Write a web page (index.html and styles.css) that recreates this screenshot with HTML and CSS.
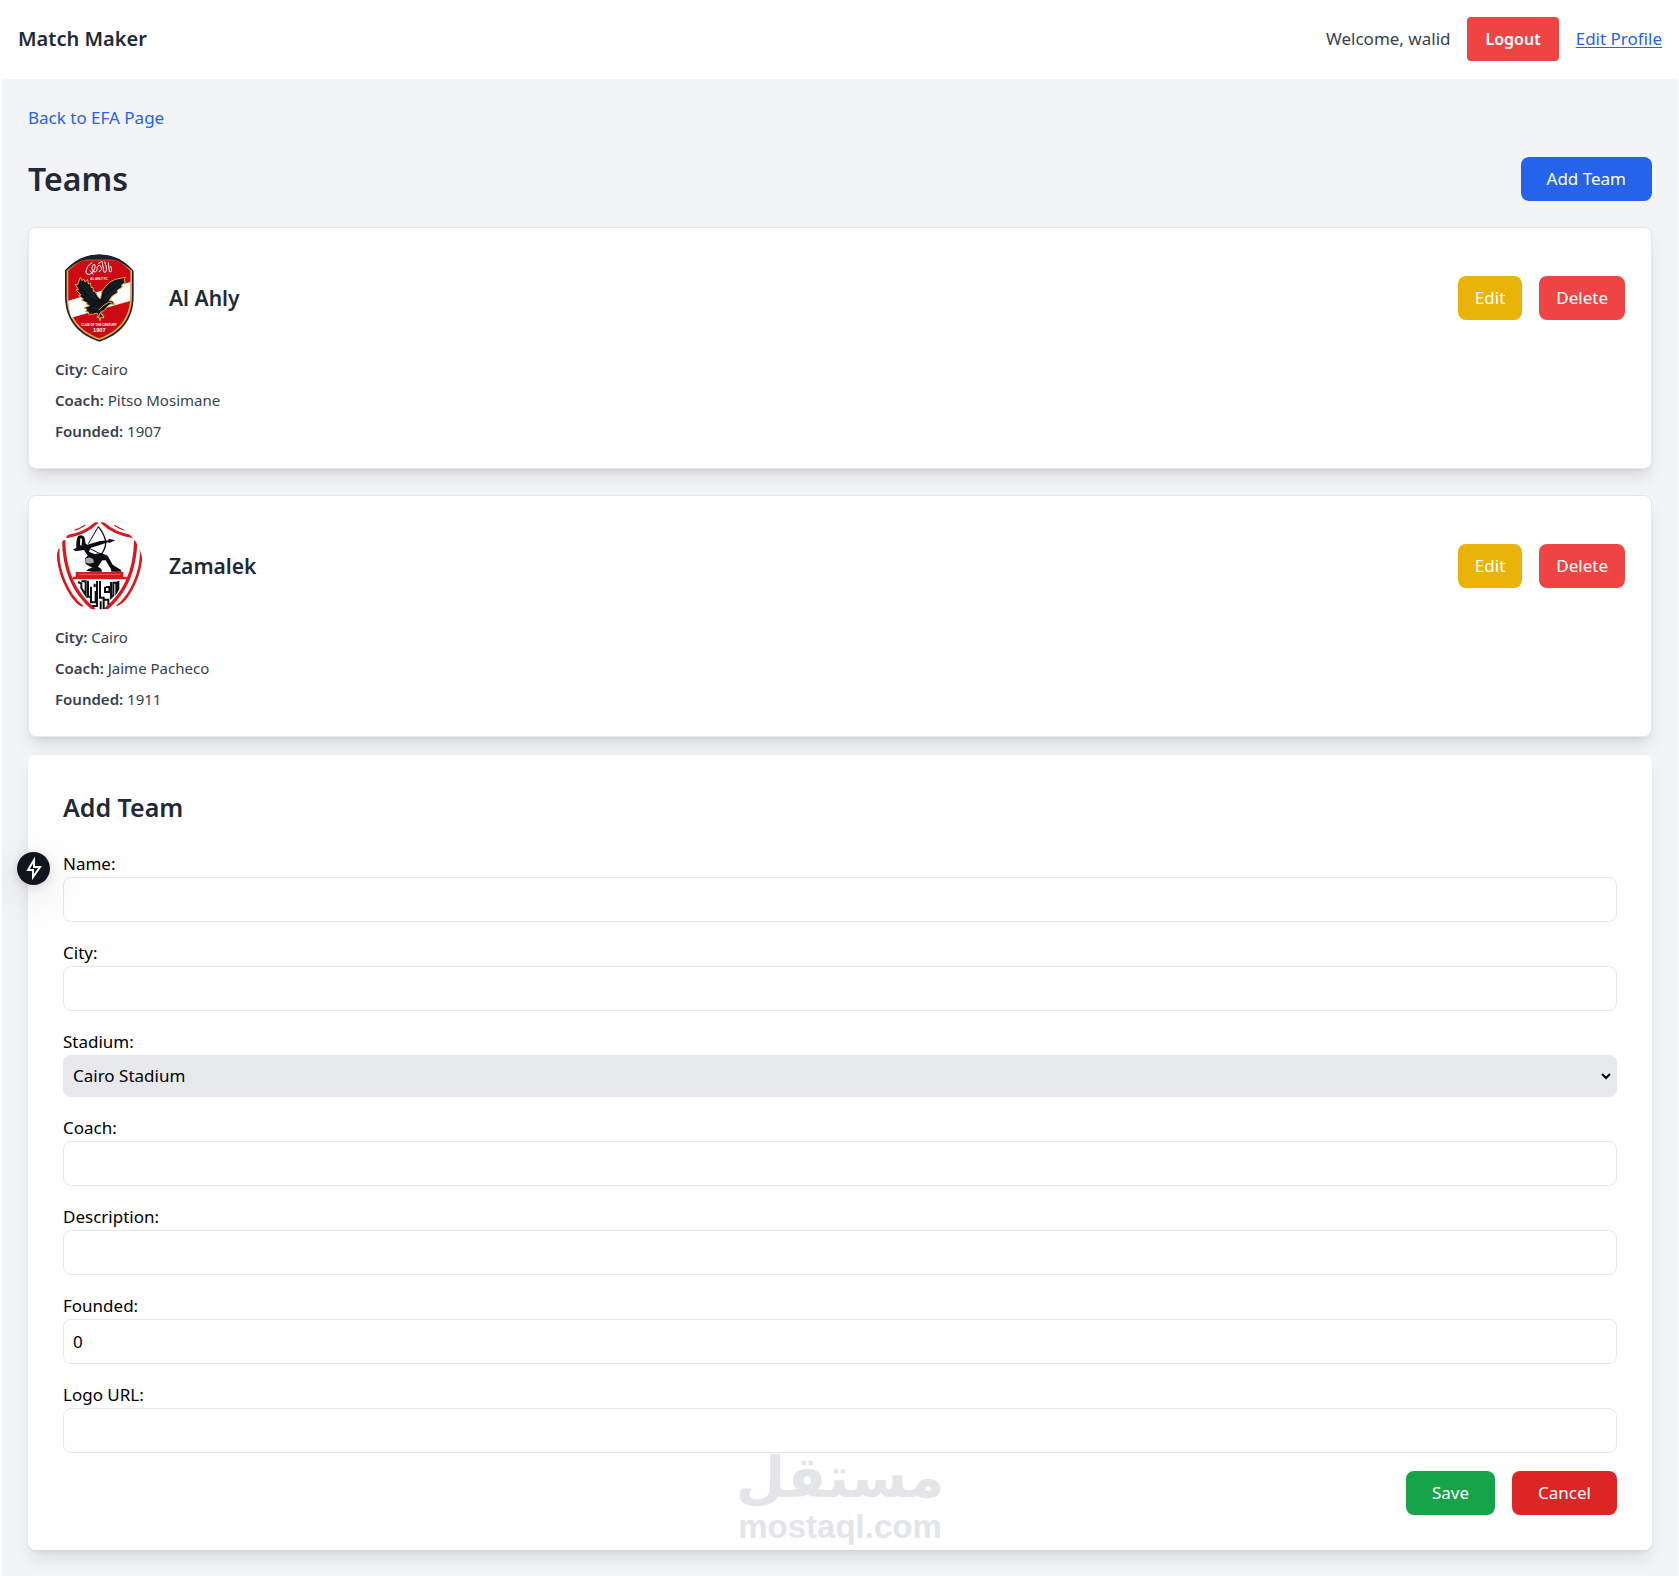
FILE: index.html
```html
<!DOCTYPE html>
<html lang="en">
<head>
  <meta charset="UTF-8">
  <meta name="viewport" content="width=device-width, initial-scale=1.0">
  <title>Match Maker</title>
  <link rel="stylesheet" href="styles.css">
</head>
<body>
  <header class="navbar">
    <div class="brand">Match Maker</div>
    <div class="user-menu">
      <span>Welcome, walid</span>
      <button type="button" class="btn-logout">Logout</button>
      <a href="#profile" class="profile-link">Edit Profile</a>
    </div>
  </header>

  <main class="page">
    <a href="#efa" class="back-link">Back to EFA Page</a>

    <div class="page-head">
      <h1>Teams</h1>
      <button type="button" class="btn btn-blue">Add Team</button>
    </div>

    <div class="team-list">
      <article class="team-card">
        <div class="team-top">
          <svg class="team-logo" viewBox="105 100 264 264" role="img" aria-label="Al Ahly crest">
            <path fill="#1d222c" d="M135 148Q180 102 238 101Q296 102 341 148V225C341 300 300 342 238 363C176 342 135 300 135 225Z"/>
            <path fill="#e3ac45" d="M140 150Q185 110 238 110Q291 110 336 150V225C336 296 298 336 238 358C178 336 140 296 140 225Z"/>
            <path fill="#1d222c" d="M172 119Q205 104 238 104Q271 104 304 119L290 117H186Z"/>
            <path fill="#cc0a14" d="M145 151Q165 129 189 119H287Q311 129 331 151V225C331 290 296 331 238 353C180 331 145 290 145 225Z"/>
            <path fill="#fff" d="M145 240L331 184V225L330 241L154 291Q145 262 145 240Z"/>
            <path fill="#10141c" stroke="#e3ac45" stroke-width="3" stroke-linejoin="round" d="M181 170L186 180L191 175L195 184L203 177L205 190L212 188L213 200L219 200L220 212L225 212L234 228L241 235L246 211L257 197L270 184L286 176L316 170L312 181L317 184L305 193L307 199L292 209L292 216L276 227L268 239L279 242L284 253L275 250L266 254L253 269L241 275L247 285L252 286L250 292L243 289L240 300L237 289L231 290L235 284L231 277L218 281L205 280L206 274L196 273L201 267L192 261L209 255L198 250L202 247L184 238L190 235L175 224L183 223L168 207L176 207L165 191L173 192Z"/>
            <path fill="none" stroke="#2f3747" stroke-width="2" d="M180 188L217 234M192 188L224 235M205 198L231 238M174 208L211 239M294 182L253 218M303 190L253 232M290 207L256 238M214 260L236 265"/>
            <path fill="none" stroke="#e3ac45" stroke-width="3" d="M237 268Q246 255 267 244L278 248M240 277L235 292M244 276L250 288"/>
            <path fill="none" stroke="#fff" stroke-width="3" stroke-linecap="round" d="M216 126Q201 135 198 151Q197 163 209 161Q221 156 224 144Q228 128 220 132Q211 143 220 153Q232 158 232 138Q237 129 243 138Q248 149 237 153M235 128L246 122L252 155Q261 157 259 139L254 124M265 126L268 153Q279 157 272 137M211 151L219 161"/>
            <text class="crest-small" x="237" y="179" text-anchor="middle">AL AHLY FC</text>
            <text class="crest-small" x="237" y="315" text-anchor="middle">CLUB OF THE CENTURY</text>
            <text class="crest-year" x="238" y="335" text-anchor="middle">1907</text>
          </svg>
          <h2>Al Ahly</h2>
          <div class="team-actions">
            <button type="button" class="btn btn-yellow">Edit</button>
            <button type="button" class="btn btn-red">Delete</button>
          </div>
        </div>
        <div class="team-info">
          <p><strong>City:</strong> Cairo</p>
          <p><strong>Coach:</strong> Pitso Mosimane</p>
          <p><strong>Founded:</strong> 1907</p>
        </div>
      </article>

      <article class="team-card">
        <div class="team-top">
          <svg class="team-logo" viewBox="105 96 264 264" role="img" aria-label="Zamalek crest">
            <g fill="none" stroke="#d71920">
              <path stroke-width="9" d="M232 96Q196 132 139 140M245 96Q282 132 339 140"/>
              <path stroke-width="4" d="M196 105Q180 116 164 120M282 105Q298 116 314 120"/>
              <path stroke-width="10" d="M131 150C132 242 164 312 223 359M347 150C346 242 314 312 255 359"/>
              <path stroke-width="8" d="M115 176C110 240 144 316 187 350M363 176C368 240 334 316 291 350"/>
              <path stroke-width="8" d="M158 264H321M171 259V250H306V259Z"/>
            </g>
            <g fill="#0c0d10">
              <path d="M175 137Q190 132 194 143L197 161L202 164L240 153L266 151L265 146L286 151L266 160L265 156L242 164L211 174L207 185L223 192Q235 190 244 189L263 197L278 224L302 239L305 245H274L273 238L257 211L247 211L234 230L243 236L247 245L214 245L199 242L206 236L217 233L197 222L195 205L203 197L192 180L176 182L168 184L159 179L169 173Q168 145 175 137Z"/>
              <path fill="#fff" d="M181 145Q187 143 186 154L184 168L180 164Z"/>
              <path fill="#aaa" d="M196 208Q203 198 219 207L222 217Q207 224 197 217Z"/>
            </g>
            <g fill="none" stroke="#0c0d10">
              <path stroke-width="3" d="M205 161L235 110M206 174L244 193"/>
              <path stroke-width="4" d="M235 110Q251 129 257 153Q259 173 244 193"/>
            </g>
            <!-- club name panel -->
            <g fill="none" stroke="#0c0d10" stroke-width="6">
              <path d="M174 276L184 281V294L197 315V274H184M204 272V320H213V297M213 290V337H227V303M231 273V348H217M240 273V323H251V357M255 290V306H268V291H258M252 329H265V344M273 276V323L280 316V278H289V307L295 297V273M242 334V358M224 281V292"/>
            </g>
          </svg>
          <h2>Zamalek</h2>
          <div class="team-actions">
            <button type="button" class="btn btn-yellow">Edit</button>
            <button type="button" class="btn btn-red">Delete</button>
          </div>
        </div>
        <div class="team-info">
          <p><strong>City:</strong> Cairo</p>
          <p><strong>Coach:</strong> Jaime Pacheco</p>
          <p><strong>Founded:</strong> 1911</p>
        </div>
      </article>
    </div>

    <form class="team-form">
      <h2>Add Team</h2>
      <div class="field">
        <label for="name">Name:</label>
        <input type="text" id="name">
      </div>
      <div class="field">
        <label for="city">City:</label>
        <input type="text" id="city">
      </div>
      <div class="field">
        <label for="stadium">Stadium:</label>
        <div class="select-wrap">
          <select id="stadium">
            <option>Cairo Stadium</option>
          </select>
          <svg class="chevron" viewBox="0 0 10 7" aria-hidden="true"><path d="M1 1L5 5L9 1"/></svg>
        </div>
      </div>
      <div class="field">
        <label for="coach">Coach:</label>
        <input type="text" id="coach">
      </div>
      <div class="field">
        <label for="description">Description:</label>
        <input type="text" id="description">
      </div>
      <div class="field">
        <label for="founded">Founded:</label>
        <input type="number" id="founded" value="0">
      </div>
      <div class="field">
        <label for="logo">Logo URL:</label>
        <input type="text" id="logo">
      </div>
      <div class="form-actions">
        <button type="button" class="btn btn-wide btn-green">Save</button>
        <button type="button" class="btn btn-wide btn-darkred">Cancel</button>
      </div>
      <div class="watermark">
        <span class="wm-ar" lang="ar">مستقل</span>
        <span class="wm-en">mostaql.com</span>
      </div>
    </form>
  </main>

  <button type="button" class="dev-badge" aria-label="Dev tools">
    <svg viewBox="0 0 33 33" aria-hidden="true"><path d="M17 8L11 18H16V25L23 15H17Z"/></svg>
  </button>
</body>
</html>
```
FILE: styles.css
```css
* {
    box-sizing: border-box;
    margin: 0;
    padding: 0;
}

body {
    font-family: "Noto Sans", "Open Sans", sans-serif;
    font-size: 17px;
    line-height: 26px;
    color: #000000;
    background-color: #ffffff;
    padding: 0 1px 0 2px;
}

button, input, select {
    font: inherit;
    color: inherit;
}

button {
    border: none;
    cursor: pointer;
}

a {
    color: #2563eb;
}

.navbar {
    display: flex;
    justify-content: space-between;
    align-items: center;
    padding: 17px 16px 18px;
}

.brand {
    font-size: 20px;
    font-weight: 600;
    color: #1f2937;
}

.user-menu {
    display: flex;
    align-items: center;
    gap: 17px;
    color: #374151;
}

.btn-logout {
    padding: 9px 18px;
    border-radius: 4px;
    background-color: #ef4444;
    color: #ffffff;
    font-size: 16px;
    font-weight: 600;
}

.profile-link {
    text-underline-offset: 2px;
}

.page {
    background-color: #f3f4f6;
    padding: 26px;
}

.back-link {
    display: block;
    width: fit-content;
    text-decoration: none;
}

.page-head {
    display: flex;
    justify-content: space-between;
    align-items: center;
    margin: 26px 0;
}

h1 {
    font-size: 32px;
    line-height: 40px;
    font-weight: 600;
    color: #1f2937;
}

.btn {
    padding: 9px 17px;
    border-radius: 8px;
    color: #ffffff;
}

.btn-blue {
    padding: 9px 26px;
    background-color: #2563eb;
}

.btn-yellow {
    background-color: #eab308;
}

.btn-red {
    background-color: #ef4444;
}

.btn-wide {
    padding: 9px 26px;
}

.btn-green {
    background-color: #16a34a;
}

.btn-darkred {
    background-color: #dc2626;
}

.team-list {
    display: grid;
    gap: 26px;
}

.team-card {
    padding: 26px;
    border: 1px solid #e5e7eb;
    border-radius: 8px;
    background-color: #ffffff;
    box-shadow: 0 11px 17px -3px rgba(0, 0, 0, 0.1), 0 4px 7px -4px rgba(0, 0, 0, 0.1);
}

.team-top {
    display: flex;
    align-items: center;
    margin-bottom: 16px;
}

.team-logo {
    width: 88px;
    height: 88px;
    margin-right: 26px;
    border-radius: 50%;
}

.crest-small {
    font: bold 9px "Liberation Sans", sans-serif;
    fill: #ffffff;
}

.crest-year {
    font: bold 17px "Liberation Sans", sans-serif;
    fill: #ffffff;
}

.team-top h2 {
    font-size: 21px;
    line-height: 30px;
    font-weight: 600;
    color: #1f2937;
}

.team-actions {
    display: flex;
    gap: 17px;
    margin-left: auto;
}

.team-info {
    display: grid;
    gap: 9px;
    font-size: 15px;
    line-height: 22px;
    color: #374151;
}

.team-info strong {
    font-weight: 600;
}

.team-form {
    position: relative;
    margin-top: 18px;
    padding: 35px;
    border-radius: 8px;
    background-color: #ffffff;
    box-shadow: 0 11px 17px -3px rgba(0, 0, 0, 0.1), 0 4px 7px -4px rgba(0, 0, 0, 0.1);
}

.team-form h2 {
    margin-bottom: 26px;
    font-size: 25px;
    line-height: 35px;
    font-weight: 600;
    color: #1f2937;
}

.field {
    margin-bottom: 18px;
}

.field label {
    display: block;
}

.field input {
    display: block;
    width: 100%;
    height: 45px;
    padding: 9px;
    border: 1px solid #e5e7eb;
    border-radius: 8px;
    background-color: #ffffff;
}

.field input[type="number"] {
    appearance: textfield;
}

.select-wrap {
    position: relative;
}

.field select {
    display: block;
    width: 100%;
    height: 42px;
    padding: 0 10px;
    appearance: none;
    border: none;
    border-radius: 8px;
    background-color: #e8e9ed;
}

.chevron {
    position: absolute;
    top: 18px;
    right: 6px;
    width: 10px;
    height: 7px;
    fill: none;
    stroke: #000000;
    stroke-width: 2;
    pointer-events: none;
}

.form-actions {
    display: flex;
    justify-content: flex-end;
    gap: 17px;
}

.watermark {
    position: absolute;
    bottom: 4px;
    left: 0;
    right: 0;
    display: flex;
    flex-direction: column;
    align-items: center;
    color: #e4e5e8;
    pointer-events: none;
}

.wm-ar {
    font: bold 57px/62px "DejaVu Sans", sans-serif;
}

.wm-en {
    font: bold 33px/38px "Liberation Sans", sans-serif;
}

.dev-badge {
    position: fixed;
    top: 852px;
    left: 17px;
    width: 33px;
    height: 33px;
    border-radius: 50%;
    background-color: #10141c;
    box-shadow: 0 12px 44px rgba(0, 0, 0, 0.15), 0 2px 12px rgba(0, 0, 0, 0.15);
}

.dev-badge svg {
    display: block;
    fill: none;
    stroke: #ffffff;
    stroke-width: 2;
}
```
